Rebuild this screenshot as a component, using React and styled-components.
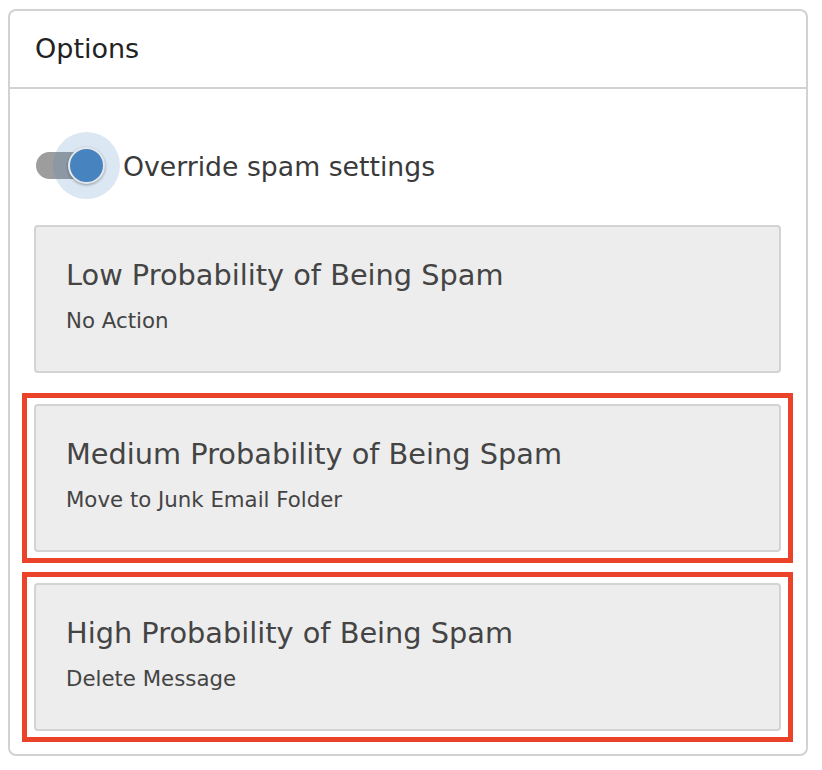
import React from 'react'
import styled, { createGlobalStyle } from 'styled-components'

const GlobalStyle = createGlobalStyle`
  body {
    margin: 9px 8px 8px;
    background: #fff;
    font-family: "DejaVu Sans", "Liberation Sans", sans-serif;
  }
  * { box-sizing: border-box; }
`

const Panel = styled.div`
  width: 800px;
  border: 2px solid #d2d2d2;
  border-radius: 8px;
  background: #fff;
`

const Header = styled.div`
  height: 78px;
  padding: 22px 25px 0;
  border-bottom: 2px solid #d2d2d2;
  font-size: 27px;
  line-height: 32px;
  color: #222;
`

const Body = styled.div`
  display: flex;
  flex-direction: column;
  gap: 9px;
  padding: 43px 13px 12px 12px;
`

const ToggleRow = styled.div`
  display: flex;
  align-items: center;
  gap: 3px;
  margin-bottom: 5px;
`

const Switch = styled.div`
  position: relative;
  width: 84px;
  height: 68px;
  margin-left: 14px;
  flex-shrink: 0;
`

const Track = styled.div`
  position: absolute;
  left: 0;
  top: 20px;
  width: 64px;
  height: 27px;
  border-radius: 14px;
  background: #9d9d9d;
`

const Halo = styled.div`
  position: absolute;
  left: 17px;
  top: 0;
  width: 67px;
  height: 67px;
  border-radius: 50%;
  background: rgba(74, 134, 192, 0.2);
`

const Knob = styled.div`
  position: absolute;
  left: 32px;
  top: 15px;
  width: 37px;
  height: 37px;
  border-radius: 50%;
  background: #4784bf;
  border: 2px solid #e4e8ec;
  box-shadow: 0 1px 3px rgba(0, 0, 0, 0.35);
`

const ToggleLabel = styled.span`
  font-size: 26.7px;
  line-height: 32px;
  color: #3a3a3a;
  padding-top: 1px;
`

const Slot = styled.div`
  padding: 6px 7px;
  border: 5px solid ${p => (p.$highlight ? '#ea4329' : 'transparent')};
`

const Card = styled.div`
  height: 148px;
  padding: 31px 30px 0;
  background: #ededed;
  border: 2px solid #d3d3d3;
  border-radius: 4px;
  color: #444;
`

const CardTitle = styled.div`
  font-size: 28.8px;
  line-height: 34px;
`

const CardAction = styled.div`
  margin-top: 16px;
  font-size: 21.3px;
  line-height: 26px;
`

const rules = [
  { id: 'low', title: 'Low Probability of Being Spam', action: 'No Action', highlight: false },
  { id: 'medium', title: 'Medium Probability of Being Spam', action: 'Move to Junk Email Folder', highlight: true },
  { id: 'high', title: 'High Probability of Being Spam', action: 'Delete Message', highlight: true },
]

const App = () => {
  return (
    <>
      <GlobalStyle />
      <Panel>
        <Header>Options</Header>
        <Body>
          <ToggleRow>
            <Switch>
              <Track />
              <Halo />
              <Knob />
            </Switch>
            <ToggleLabel>Override spam settings</ToggleLabel>
          </ToggleRow>
          {rules.map(rule => (
            <Slot key={rule.id} $highlight={rule.highlight}>
              <Card>
                <CardTitle>{rule.title}</CardTitle>
                <CardAction>{rule.action}</CardAction>
              </Card>
            </Slot>
          ))}
        </Body>
      </Panel>
    </>
  )
}

export default App
